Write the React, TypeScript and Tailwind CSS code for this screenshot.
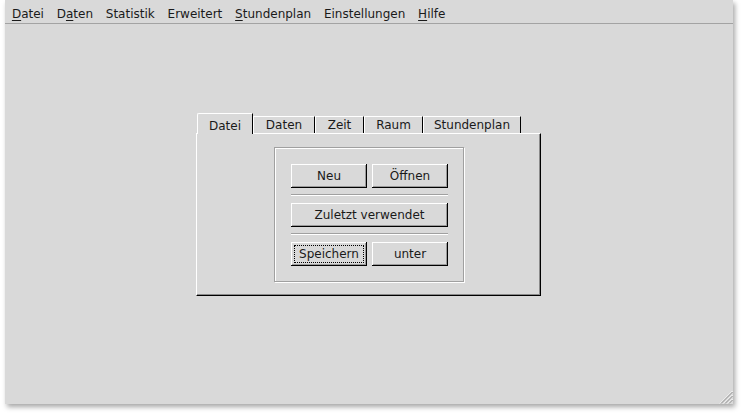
import React from 'react';

const FONT = { fontFamily: '"DejaVu Sans", Verdana, sans-serif' };

const menus: { label: string; u?: number }[] = [
  { label: 'Datei', u: 0 },
  { label: 'Daten', u: 1 },
  { label: 'Statistik' },
  { label: 'Erweitert' },
  { label: 'Stundenplan', u: 0 },
  { label: 'Einstellungen' },
  { label: 'Hilfe', u: 0 },
];

const tabs = [
  { label: 'Daten', w: 'w-[62px]' },
  { label: 'Zeit', w: 'w-[49px]' },
  { label: 'Raum', w: 'w-[59px]' },
  { label: 'Stundenplan', w: 'w-[98px]' },
];

function MenuLabel({ label, u }: { label: string; u?: number }) {
  if (u === undefined) return <>{label}</>;
  return (
    <>
      {label.slice(0, u)}
      <span className="underline underline-offset-2">{label[u]}</span>
      {label.slice(u + 1)}
    </>
  );
}

function Button({ children, wide, focus }: { children: React.ReactNode; wide?: boolean; focus?: boolean }) {
  return (
    <div
      className={`${wide ? 'w-[157px]' : 'w-[76px]'} h-[24px] flex items-center justify-center bg-[#d9d9d9] shadow-[inset_-1px_-1px_0_#000,inset_1px_1px_0_#fff,inset_-2px_-2px_0_#9a9a9a] p-[3px]`}
    >
      {focus ? (
        <span className="w-full h-full flex items-center justify-center border border-dotted border-black leading-none">
          {children}
        </span>
      ) : (
        <span className="leading-none">{children}</span>
      )}
    </div>
  );
}

function Separator() {
  return <div className="w-[157px] h-[2px] border-t border-[#a0a0a0] border-b border-b-white" />;
}

export default function App() {
  return (
    <div className="w-[741px] h-[413px] bg-white overflow-hidden text-[12px] text-[#1a1a1a]" style={FONT}>
      <div className="relative ml-[5px] w-[728px] h-[404px] bg-[#d9d9d9] shadow-[2px_3px_5px_rgba(0,0,0,0.35)]">
        {/* Menu bar */}
        <div className="h-[24px] flex items-center border-b border-[#a3a3a3] pt-[5px] pl-[0.5px]">
          {menus.map((m) => (
            <span key={m.label} className="px-[6.4px]">
              <MenuLabel label={m.label} u={m.u} />
            </span>
          ))}
        </div>

        {/* Notebook */}
        <div className="pt-[89px] pl-[191px]">
          <div className="w-[345px]">
            <div className="flex items-end pl-px h-[20px]">
              <div className="relative z-10 w-[56px] h-[21px] -mb-px bg-[#d9d9d9] border-t border-l border-white border-r border-r-black flex items-start justify-center pt-[3px] rounded-tl-[2px]">
                Datei
              </div>
              {tabs.map((t) => (
                <div
                  key={t.label}
                  className={`${t.w} h-[17px] border-t border-l border-white border-r border-r-black flex items-center justify-center pb-px`}
                >
                  {t.label}
                </div>
              ))}
            </div>
            <div className="h-[163px] border-t border-l border-white border-r border-b border-r-black border-b-black shadow-[inset_-1px_-1px_0_#8a8a8a] pl-[77px] pt-[13px]">
              <div className="w-[190px] h-[135px] border border-[#a0a0a0] shadow-[inset_1px_1px_0_#fff,1px_1px_0_#fff] pl-[16px] pt-[16px] flex flex-col gap-[6px]">
                <div className="flex gap-[5px]">
                  <Button>Neu</Button>
                  <Button>Öffnen</Button>
                </div>
                <Separator />
                <div className="pt-px">
                  <Button wide>Zuletzt verwendet</Button>
                </div>
                <Separator />
                <div className="pt-[1px] flex gap-[5px]">
                  <Button focus>Speichern</Button>
                  <Button>unter</Button>
                </div>
              </div>
            </div>
          </div>
        </div>

        {/* Resize grip */}
        <svg className="absolute right-0 bottom-0" width="15" height="15" viewBox="0 0 15 15">
          <g strokeWidth="1">
            <line x1="14.5" y1="2" x2="2" y2="14.5" stroke="#ffffff" />
            <line x1="14.5" y1="3" x2="3" y2="14.5" stroke="#8a8a8a" />
            <line x1="14.5" y1="6" x2="6" y2="14.5" stroke="#ffffff" />
            <line x1="14.5" y1="7" x2="7" y2="14.5" stroke="#8a8a8a" />
            <line x1="14.5" y1="10" x2="10" y2="14.5" stroke="#ffffff" />
            <line x1="14.5" y1="11" x2="11" y2="14.5" stroke="#8a8a8a" />
          </g>
        </svg>
      </div>
    </div>
  );
}
